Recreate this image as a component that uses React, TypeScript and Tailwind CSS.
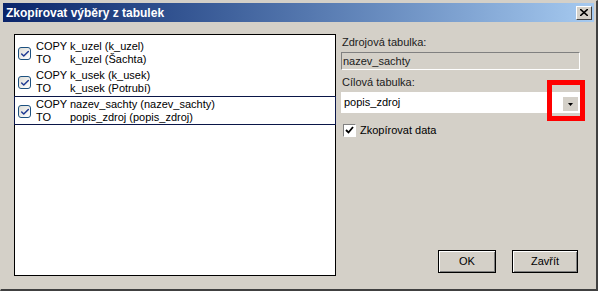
import { Check } from "lucide-react";

const items = [
  { from: "k_uzel (k_uzel)", to: "k_uzel (Šachta)" },
  { from: "k_usek (k_usek)", to: "k_usek (Potrubí)" },
  { from: "nazev_sachty (nazev_sachty)", to: "popis_zdroj (popis_zdroj)" },
];

function ListCheck() {
  return (
    <div className="w-[13px] h-[13px] mt-[2px] rounded-[3px] border border-[#1c5180] bg-gradient-to-br from-[#dcdcd7] to-white flex items-center justify-center shrink-0">
      <Check className="w-[10px] h-[10px]" strokeWidth={3.5} color="#1f3a93" />
    </div>
  );
}

export default function App() {
  return (
    <div className="w-[598px] h-[291px] bg-[#d4d0c8] border-t border-l border-t-[#d4d0c8] border-l-[#d4d0c8] border-r-2 border-b-2 border-r-[#404040] border-b-[#404040] flex flex-col text-[11px] text-black font-['Liberation_Sans',Arial,sans-serif]">
      <div className="mx-[2px] mt-[2px] h-[19px] bg-gradient-to-r from-[#0a246a] to-[#a6caf0] flex items-center justify-between pl-[3px] pr-[2px]">
        <span className="text-white font-bold text-[12px]">Zkopírovat výběry z tabulek</span>
        <div className="w-[16px] h-[14px] bg-[#d4d0c8] border-t border-l border-white border-r border-b border-r-[#404040] border-b-[#404040] flex items-center justify-center">
          <svg width="8" height="7" viewBox="0 0 8 7">
            <path d="M0 0 L8 7 M8 0 L0 7" stroke="black" strokeWidth="1.6" />
          </svg>
        </div>
      </div>

      <div className="flex flex-1 pl-[13px] pt-[12px] pr-[15px] pb-[13px]">
        <div className="w-[322px] bg-white border border-black flex flex-col pt-[3px]">
          {items.map((it, i) => (
            <div
              key={i}
              className={`h-[29px] flex items-center gap-[5px] pl-[2px] ${i === 2 ? "border border-[#0a1648] -mx-px pl-[3px]" : "border border-transparent"}`}
            >
              <ListCheck />
              <div className="leading-[13px]">
                <div className="flex">
                  <span className="w-[34px] shrink-0">COPY</span>
                  <span>{it.from}</span>
                </div>
                <div className="flex">
                  <span className="w-[34px] shrink-0">TO</span>
                  <span>{it.to}</span>
                </div>
              </div>
            </div>
          ))}
        </div>

        <div className="flex flex-col flex-1 pl-[5px] pt-[1px]">
          <div className="pl-[1px] h-[14px] leading-[14px] text-[#202020]">Zdrojová tabulka:</div>
          <div className="mt-[3px] h-[18px] w-[239px] bg-[#d4d0c8] border-t border-l border-[#808080] border-r border-b border-r-white border-b-white flex items-center pl-[1px] text-[#202020]">
            nazev_sachty
          </div>
          <div className="mt-[5px] pl-[1px] h-[14px] leading-[14px] text-[#202020]">Cílová tabulka:</div>
          <div className="relative mt-[3px] h-[21px] w-[239px] bg-white flex items-center pl-[3px]">
            popis_zdroj
            <div className="absolute right-[2px] top-[5px] w-[15px] h-[14px] bg-[#d4d0c8] flex items-center justify-center">
              <svg width="5" height="3" viewBox="0 0 5 3">
                <path d="M0 0 H5 L2.5 3 Z" fill="black" />
              </svg>
            </div>
            <div className="absolute left-[206px] top-[-12px] w-[38px] h-[41px] border-[5px] border-[#ff0000]" />
          </div>
          <div className="mt-[9px] flex items-center gap-[4px] pl-[2px]">
            <div className="w-[13px] h-[13px] bg-white border-t border-l border-[#808080] border-r border-b border-r-white border-b-white flex items-center justify-center">
              <svg width="9" height="8" viewBox="0 0 9 8">
                <path d="M1 4 L3.5 6.5 L8 1" stroke="black" strokeWidth="1.8" fill="none" />
              </svg>
            </div>
            <span>Zkopírovat data</span>
          </div>
          <div className="flex-1" />
          <div className="flex justify-end gap-[16px] pr-[3px] mb-[3px]">
            <button className="w-[58px] h-[23px] bg-[#d4d0c8] border border-black shadow-[inset_1px_1px_0_white,inset_-1px_-1px_0_#808080]">OK</button>
            <button className="w-[66px] h-[23px] bg-[#d4d0c8] border border-black shadow-[inset_1px_1px_0_white,inset_-1px_-1px_0_#808080]">Zavřít</button>
          </div>
        </div>
      </div>
    </div>
  );
}
